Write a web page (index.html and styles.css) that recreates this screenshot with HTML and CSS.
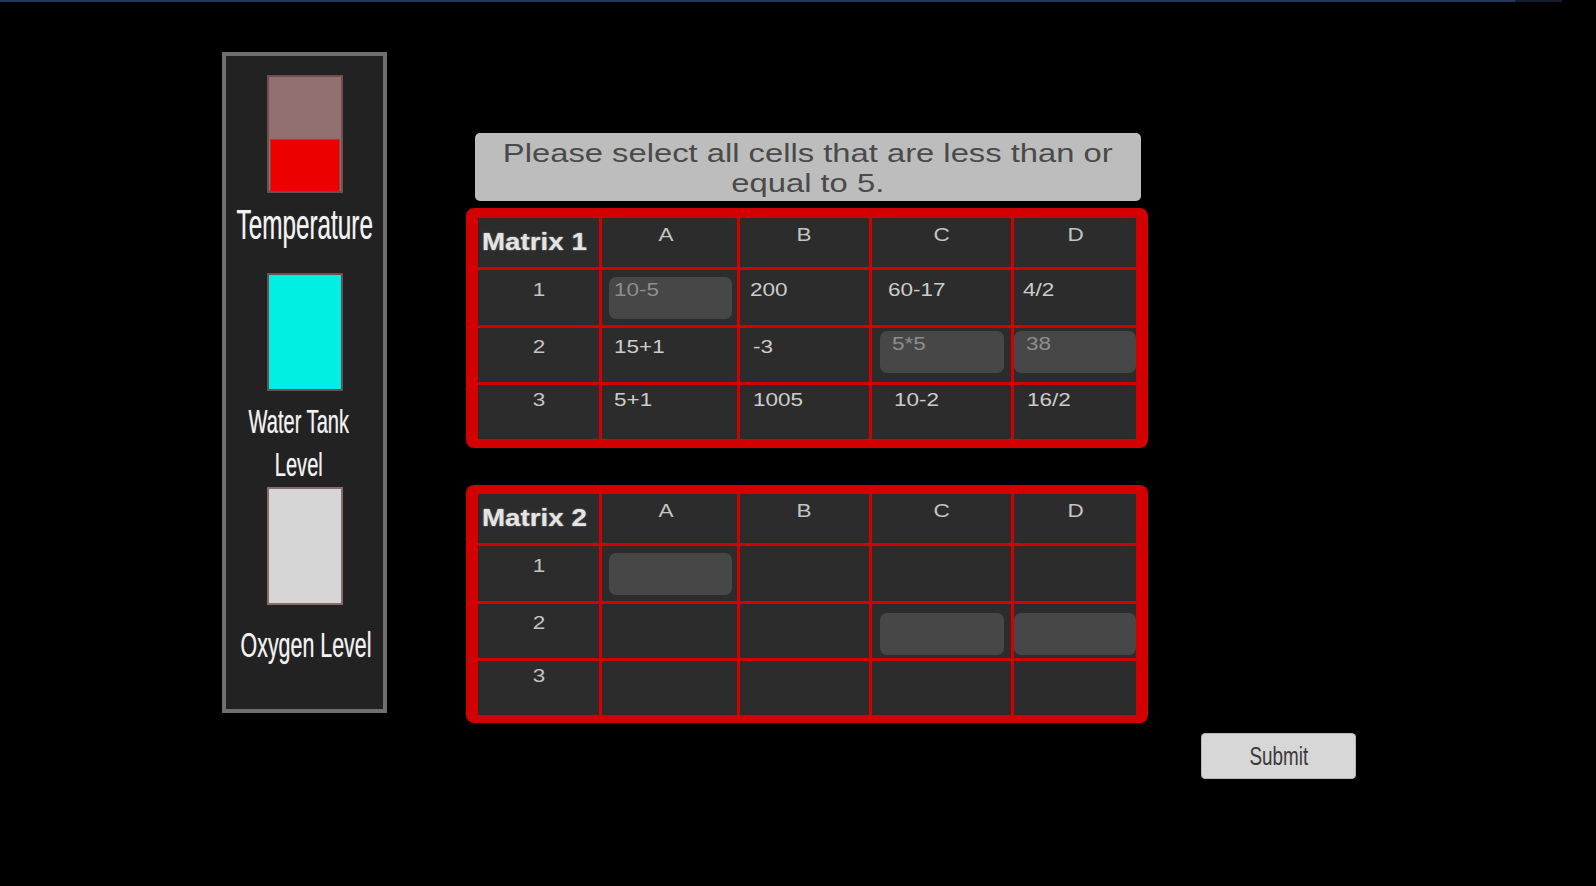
FILE: index.html
```html
<!DOCTYPE html>
<html lang="en">
<head>
<meta charset="utf-8">
<title>Matrix Task</title>
<link rel="stylesheet" href="styles.css">
</head>
<body>
<div class="topline"><div class="topline-main"></div><div class="topline-dim"></div></div>
<div class="stage">
  <aside class="panel">
    <div class="gauge gauge-temp"><div class="gauge-fill"></div></div>
    <div class="label label-temp"><span class="sq sq-temp">Temperature</span></div>
    <div class="gauge gauge-water"></div>
    <div class="label label-water"><span class="sq sq-water">Water Tank<br>Level</span></div>
    <div class="gauge gauge-oxy"></div>
    <div class="label label-oxy"><span class="sq sq-oxy">Oxygen Level</span></div>
  </aside>

  <main class="center">
    <div class="prompt"><span class="wide">Please select all cells that are less than or<br>equal to 5.</span></div>

    <section class="matrix m1">
      <div class="cell corner"><span class="title">Matrix 1</span></div>
      <div class="cell head"><span class="tc">A</span></div>
      <div class="cell head"><span class="tc">B</span></div>
      <div class="cell head"><span class="tc">C</span></div>
      <div class="cell head"><span class="tc">D</span></div>

      <div class="cell rowno r1"><span class="tc">1</span></div>
      <div class="cell"><div class="hl hl-a1"><span class="t">10-5</span></div></div>
      <div class="cell val r1 cb"><span class="t">200</span></div>
      <div class="cell val r1 cc"><span class="t">60-17</span></div>
      <div class="cell val r1 cd"><span class="t">4/2</span></div>

      <div class="cell rowno r2"><span class="tc">2</span></div>
      <div class="cell val r2 ca"><span class="t">15+1</span></div>
      <div class="cell val r2 cb2"><span class="t">-3</span></div>
      <div class="cell"><div class="hl hl-c2"><span class="t">5*5</span></div></div>
      <div class="cell"><div class="hl hl-d2"><span class="t">38</span></div></div>

      <div class="cell rowno r3"><span class="tc">3</span></div>
      <div class="cell val r3 ca"><span class="t">5+1</span></div>
      <div class="cell val r3 cb3"><span class="t">1005</span></div>
      <div class="cell val r3 cc3"><span class="t">10-2</span></div>
      <div class="cell val r3 cd3"><span class="t">16/2</span></div>
    </section>

    <section class="matrix m2">
      <div class="cell corner"><span class="title">Matrix 2</span></div>
      <div class="cell head"><span class="tc">A</span></div>
      <div class="cell head"><span class="tc">B</span></div>
      <div class="cell head"><span class="tc">C</span></div>
      <div class="cell head"><span class="tc">D</span></div>

      <div class="cell rowno r1"><span class="tc">1</span></div>
      <div class="cell"><div class="hl hl-a1"></div></div>
      <div class="cell"></div>
      <div class="cell"></div>
      <div class="cell"></div>

      <div class="cell rowno r2"><span class="tc">2</span></div>
      <div class="cell"></div>
      <div class="cell"></div>
      <div class="cell"><div class="hl hl-c2b"></div></div>
      <div class="cell"><div class="hl hl-d2b"></div></div>

      <div class="cell rowno r3"><span class="tc">3</span></div>
      <div class="cell"></div>
      <div class="cell"></div>
      <div class="cell"></div>
      <div class="cell"></div>
    </section>
  </main>

  <button class="submit" type="button"><span class="sq sq-submit">Submit</span></button>
</div>
</body>
</html>
```

FILE: styles.css
```css
html, body {
  margin: 0;
  padding: 0;
  background: #000;
  width: 1596px;
  height: 886px;
  overflow: hidden;
  font-family: "Liberation Sans", Arial, sans-serif;
}

.topline {
  display: flex;
  height: 2px;
}
.topline-main {
  width: 1515px;
  background: #25385f;
}
.topline-dim {
  width: 47px;
  background: #151d2c;
}

.stage {
  display: flex;
  align-items: flex-start;
  padding: 50px 0 0 222px;
}

/* ---------- left status panel ---------- */
.panel {
  box-sizing: border-box;
  width: 165px;
  height: 661px;
  border: 4px solid #6f6f6f;
  background: #222222;
  display: flex;
  flex-direction: column;
  align-items: center;
}

.gauge {
  box-sizing: border-box;
  width: 76px;
  height: 118px;
  border: 2px solid #6c5050;
  flex: none;
}
.gauge-temp {
  margin-top: 19px;
  background: #937070;
  display: flex;
  flex-direction: column;
  justify-content: flex-end;
}
.gauge-fill {
  height: 51px;
  margin: 0 1px;
  background: #ee0000;
  border-top: 1px solid #a03c3c;
  border-left: 1px solid #a03c3c;
  border-right: 1px solid #a03c3c;
}
.gauge-water {
  margin-top: 27px;
  background: #00eee4;
}
.gauge-oxy {
  margin-top: 1px;
  background: #d6d6d6;
  border-color: #8c6a6a;
}

.label {
  color: #f2f2f2;
  text-align: center;
  white-space: nowrap;
  text-shadow: 0 0 1px rgba(255, 255, 255, 0.45);
  flex: none;
}
.sq {
  display: inline-block;
  transform-origin: center center;
}
.label-temp {
  margin-top: 10px;
  font-size: 43px;
  line-height: 43px;
}
.sq-temp { transform: scaleX(0.565); }
.label-water {
  margin-top: 9px;
  margin-right: 12px;
  font-size: 33.5px;
  line-height: 43px;
}
.sq-water { transform: scaleX(0.6); }
.label-oxy {
  margin-top: 22px;
  margin-left: 3px;
  font-size: 35px;
  line-height: 35px;
}
.sq-oxy { transform: scaleX(0.612); }

/* ---------- center column ---------- */
.center {
  margin-left: 79px;
  padding-top: 81px;
  width: 682px;
  display: flex;
  flex-direction: column;
}

.prompt {
  box-sizing: border-box;
  margin: 0 7px 0 9px;
  height: 68px;
  padding-top: 5px;
  background: #bdbdbd;
  border-radius: 5px;
  text-align: center;
  color: #4a4a4a;
  font-size: 25px;
  line-height: 30px;
  white-space: nowrap;
}
.wide {
  display: inline-block;
  transform: scaleX(1.31);
  transform-origin: center top;
}

.matrix {
  display: grid;
  grid-template-columns: 121px 135px 129px 139px 122px;
  grid-template-rows: 49px 55px 54px 54px;
  gap: 3px;
  background: #d20000;
  border-radius: 8px;
  padding: 10px 12px 9px 12px;
}
.m1 { margin-top: 7px; }
.m2 {
  margin-top: 37px;
  padding: 9px 12px 8px 12px;
}

.cell {
  background: #2c2c2c;
  color: #cccccc;
  font-size: 18px;
  line-height: 20px;
  box-sizing: border-box;
  display: flex;
  flex-direction: column;
}

.t {
  display: inline-block;
  transform: scaleX(1.25);
  transform-origin: left top;
  align-self: flex-start;
}
.tc {
  display: inline-block;
  transform: scaleX(1.25);
  transform-origin: center top;
}

.corner {
  padding: 11px 0 0 4px;
}
.title {
  display: inline-block;
  font-weight: bold;
  font-size: 23.5px;
  line-height: 27px;
  color: #e4e4e4;
  text-shadow: 0 0 1.5px rgba(255, 255, 255, 0.6);
  transform: scaleX(1.18);
  transform-origin: left top;
  align-self: flex-start;
}

.head {
  align-items: center;
  padding-top: 7px;
  color: #c4c4c4;
}
.head:nth-child(2) { padding-right: 6px; }
.rowno {
  align-items: center;
  color: #c4c4c4;
  padding-left: 2px;
}

.r1 { padding-top: 10px; }
.r2 { padding-top: 9px; }
.r3 { padding-top: 5px; }

.ca { padding-left: 12px; }
.cb { padding-left: 10px; }
.cb2 { padding-left: 13px; }
.cb3 { padding-left: 13px; }
.cc { padding-left: 16px; }
.cc3 { padding-left: 22px; }
.cd { padding-left: 9px; }
.cd3 { padding-left: 13px; }

.hl {
  background: #474747;
  border-radius: 7px;
  color: #8e8e8e;
  height: 42px;
  box-sizing: border-box;
  display: flex;
  flex-direction: column;
  padding: 3px 0 0 5px;
}
.hl-a1 { margin: 7px 5px 0 7px; }
.hl-c2 { margin: 3px 7px 0 8px; padding-left: 12px; }
.hl-d2 { margin: 3px 0 0 0; padding-left: 12px; }
.hl-c2b { margin: 9px 7px 0 8px; }
.hl-d2b { margin: 9px 0 0 0; }

/* ---------- submit ---------- */
.submit {
  margin: 681px 0 0 53px;
  width: 155px;
  height: 46px;
  box-sizing: border-box;
  padding: 0;
  border: 1px solid #b5b5b5;
  border-radius: 4px;
  background: #d7d7d7;
  color: #3a3a3a;
  font-family: "Liberation Sans", Arial, sans-serif;
  font-size: 25px;
  line-height: 44px;
  text-align: center;
  white-space: nowrap;
  flex: none;
}
.sq-submit { transform: scaleX(0.755); }
```
